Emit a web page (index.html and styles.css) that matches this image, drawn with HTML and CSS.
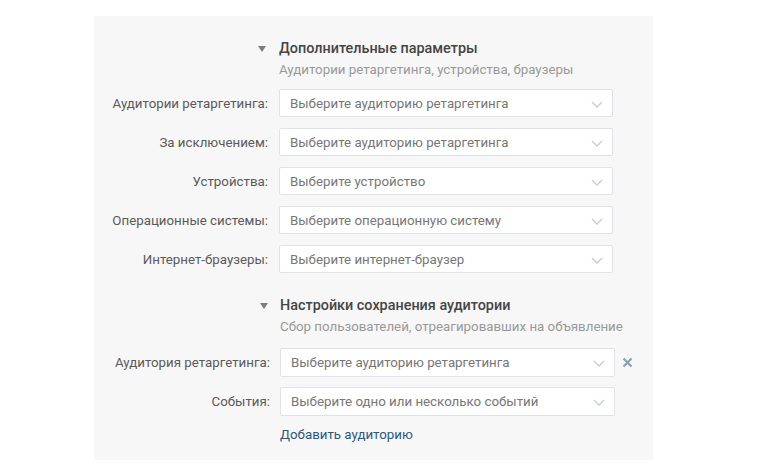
FILE: index.html
```html
<!DOCTYPE html>
<html lang="ru">
<head>
<meta charset="utf-8">
<title>Параметры</title>
<link rel="stylesheet" href="styles.css">
</head>
<body>
<div class="panel">
  <section class="group group-first">
    <svg class="caret" viewBox="0 0 8 6"><path d="M0 0h8L4 6z"/></svg>
    <div class="head">
      <h3 class="title">Дополнительные параметры</h3>
      <p class="subtitle">Аудитории ретаргетинга, устройства, браузеры</p>
    </div>

    <label class="label">Аудитории ретаргетинга:</label>
    <div class="select"><span>Выберите аудиторию ретаргетинга</span><svg class="chev" viewBox="0 0 12 7"><path d="M1 1l5 5 5-5"/></svg></div>

    <label class="label">За исключением:</label>
    <div class="select"><span>Выберите аудиторию ретаргетинга</span><svg class="chev" viewBox="0 0 12 7"><path d="M1 1l5 5 5-5"/></svg></div>

    <label class="label">Устройства:</label>
    <div class="select"><span>Выберите устройство</span><svg class="chev" viewBox="0 0 12 7"><path d="M1 1l5 5 5-5"/></svg></div>

    <label class="label">Операционные системы:</label>
    <div class="select"><span>Выберите операционную систему</span><svg class="chev" viewBox="0 0 12 7"><path d="M1 1l5 5 5-5"/></svg></div>

    <label class="label">Интернет-браузеры:</label>
    <div class="select"><span>Выберите интернет-браузер</span><svg class="chev" viewBox="0 0 12 7"><path d="M1 1l5 5 5-5"/></svg></div>
  </section>

  <section class="group group-second">
    <svg class="caret" viewBox="0 0 8 6"><path d="M0 0h8L4 6z"/></svg>
    <div class="head">
      <h3 class="title">Настройки сохранения аудитории</h3>
      <p class="subtitle">Сбор пользователей, отреагировавших на объявление</p>
    </div>

    <label class="label">Аудитория ретаргетинга:</label>
    <div class="select-wrap">
      <div class="select"><span>Выберите аудиторию ретаргетинга</span><svg class="chev" viewBox="0 0 12 7"><path d="M1 1l5 5 5-5"/></svg></div>
      <svg class="remove" viewBox="0 0 11 11"><path d="M1.5 1.5l8 8M9.5 1.5l-8 8"/></svg>
    </div>

    <label class="label">События:</label>
    <div class="select"><span>Выберите одно или несколько событий</span><svg class="chev" viewBox="0 0 12 7"><path d="M1 1l5 5 5-5"/></svg></div>

    <span></span>
    <a class="link" href="#">Добавить аудиторию</a>
  </section>
</div>
</body>
</html>
```

FILE: styles.css
```css
* { box-sizing: border-box; }

html, body {
  margin: 0;
  padding: 0;
  background: #ffffff;
}

body {
  font-family: Roboto, "Noto Sans", "Liberation Sans", sans-serif;
  font-size: 13.3px;
  color: #555;
}

.panel {
  margin: 16px 0 0 94px;
  width: 559px;
  height: 444px;
  background: #f7f7f7;
  padding: 23px 0 0 0;
}

.group {
  display: grid;
  grid-template-columns: 174px 334px;
  column-gap: 11px;
  align-items: center;
}

.group-second {
  margin-top: 12px;
  grid-template-columns: 176px 335px;
  column-gap: 10px;
}

.caret {
  justify-self: end;
  align-self: start;
  width: 8px;
  height: 6px;
  margin-top: 7px;
  margin-right: 2px;
  fill: #7d7d7d;
}

.head {
  margin-bottom: 10px;
  white-space: nowrap;
}

.group-second .head {
  margin-bottom: 12px;
}

.title {
  margin: 0;
  font-size: 14.4px;
  line-height: 20px;
  font-weight: 500;
  color: #454545;
}

.subtitle {
  margin: 2px 0 0;
  font-size: 13.3px;
  line-height: 18px;
  color: #999;
}

.label {
  justify-self: end;
  white-space: nowrap;
  font-size: 13.3px;
  color: #5a5a5a;
  margin-bottom: 11px;
}

.select {
  height: 28px;
  margin-bottom: 11px;
  background: #fff;
  border: 1px solid #dfe2e6;
  border-radius: 2px;
  padding: 0 9px 0 10px;
  display: flex;
  align-items: center;
  justify-content: space-between;
  color: #777;
  font-size: 13.3px;
  white-space: nowrap;
}

.group-second .select {
  height: 29px;
  margin-bottom: 10px;
}

.chev {
  width: 12px;
  height: 7px;
  margin-top: 2px;
  fill: none;
  stroke: #c7ccd2;
  stroke-width: 1.3;
}

.select-wrap {
  position: relative;
}

.remove {
  position: absolute;
  left: 342px;
  top: 9px;
  width: 11px;
  height: 11px;
  fill: none;
  stroke: #87a0b6;
  stroke-width: 2.2;
}

.link {
  font-size: 13.3px;
  line-height: 18px;
  color: #2a5885;
  text-decoration: none;
  white-space: nowrap;
}
```
